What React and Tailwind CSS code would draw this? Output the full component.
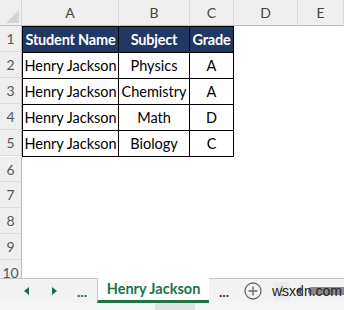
import React from "react";

const cols = [
  { key: "A", w: "w-[97px]" },
  { key: "B", w: "w-[71px]" },
  { key: "C", w: "w-[44px]" },
  { key: "D", w: "w-[64px]" },
  { key: "E", w: "flex-1" },
];

const data = [
  ["Henry Jackson", "Physics", "A"],
  ["Henry Jackson", "Chemistry", "A"],
  ["Henry Jackson", "Math", "D"],
  ["Henry Jackson", "Biology", "C"],
];

function RowNum({ n }) {
  return (
    <div className="w-[22px] shrink-0 h-full flex items-center justify-center bg-[#efefef] border-r border-[#bdbdbd] border-b border-b-[#dcdcdc] text-[14px] text-[#555]">
      {n}
    </div>
  );
}

export default function App() {
  return (
    <div
      className="w-[344px] h-[310px] overflow-hidden relative bg-white flex flex-col whitespace-nowrap"
      style={{ fontFamily: "Lato, 'Liberation Sans', sans-serif" }}
    >
      {/* sheet */}
      <div className="h-[278px] overflow-hidden shrink-0">
        {/* column headers */}
        <div className="flex h-[26px] bg-[#efefef] border-b border-[#bdbdbd]">
          <div className="w-[22px] shrink-0 border-r border-[#d6d6d6] relative">
            <svg className="absolute right-[2px] bottom-[2px]" width="13" height="13" viewBox="0 0 13 13">
              <polygon points="13,0 13,13 0,13" fill="#d4d4d4" />
            </svg>
          </div>
          {cols.map((c) => (
            <div
              key={c.key}
              className={`${c.w} shrink-0 flex items-center justify-center border-r border-[#dadada] text-[14px] text-[#444]`}
            >
              {c.key}
            </div>
          ))}
        </div>

        {/* row 1 header */}
        <div className="flex h-[26px]">
          <RowNum n={1} />
          <div className="flex bg-[#203864] border-l border-t border-r border-black text-white font-bold text-[14.5px] tracking-[-0.2px]">
            <div className="w-[96px] flex items-center justify-center border-r border-black">Student Name</div>
            <div className="w-[71px] flex items-center justify-center border-r border-black">Subject</div>
            <div className="w-[43px] flex items-center justify-center">Grade</div>
          </div>
        </div>

        {/* data rows */}
        {data.map((r, i) => (
          <div key={i} className="flex h-[26px]">
            <RowNum n={i + 2} />
            <div className="flex border-l border-r border-t border-black text-[14.5px] text-black">
              <div className="w-[96px] flex items-center justify-center border-r border-black">{r[0]}</div>
              <div className="w-[71px] flex items-center justify-center border-r border-black">{r[1]}</div>
              <div className="w-[43px] flex items-center justify-center">{r[2]}</div>
            </div>
          </div>
        ))}
        <div className="ml-[22px] w-[212px] border-t border-black" />

        {[6, 7, 8, 9, 10].map((n) => (
          <div key={n} className={`flex ${n === 6 ? "h-[25px]" : "h-[26px]"}`}>
            <RowNum n={n} />
          </div>
        ))}
      </div>

      {/* tab bar */}
      <div className="h-[25px] shrink-0 flex bg-[#f3f3f3]">
        <div className="w-[97px] shrink-0 border-t border-[#c4c4c4] flex items-center">
          <svg className="ml-[24px]" width="5" height="8" viewBox="0 0 5 8">
            <polygon points="5,0 5,8 0,4" fill="#1e6b45" />
          </svg>
          <svg className="ml-[23px]" width="5" height="8" viewBox="0 0 5 8">
            <polygon points="0,0 0,8 5,4" fill="#1e6b45" />
          </svg>
          <span className="ml-[20px] text-[14px] font-bold text-[#1e6b45] leading-none mt-[2px]">...</span>
        </div>
        <div className="w-[112px] shrink-0 bg-white border-l border-[#c4c4c4] border-b-[3px] border-b-[#217346] flex items-center justify-center text-[14.5px] font-bold text-[#217346]">
          Henry Jackson
        </div>
        <div className="flex-1 border-t border-[#c4c4c4] flex items-center">
          <span className="ml-[10px] text-[14px] font-bold text-[#333] leading-none mt-[2px]">...</span>
          <svg className="ml-[15px]" width="18" height="18" viewBox="0 0 18 18">
            <circle cx="9" cy="9" r="8" fill="none" stroke="#6b6b6b" strokeWidth="1.3" />
            <path d="M9 4.5v9M4.5 9h9" stroke="#6b6b6b" strokeWidth="1.4" />
          </svg>
          <div className="ml-[12px] h-[18px] w-[16px] bg-[#ececec] flex flex-col items-center justify-center gap-[2px]">
            <span className="w-[2px] h-[2px] bg-[#aaa]" />
            <span className="w-[2px] h-[2px] bg-[#aaa]" />
            <span className="w-[2px] h-[2px] bg-[#aaa]" />
          </div>
          <svg className="ml-[6px]" width="5" height="8" viewBox="0 0 5 8">
            <polygon points="5,0 5,8 0,4" fill="#606060" />
          </svg>
          <div className="ml-[7px] h-[8px] flex-1 rounded-l-full bg-[#8a8a8a]" />
        </div>
      </div>

      {/* bottom strip */}
      <div className="flex-1 bg-[#f7f7f7] flex">
        <div className="ml-[155px] w-[40px] bg-[#e2e2e2]" />
      </div>

      <span
        className="absolute left-[272px] top-[284px] text-[14px] text-[#222] leading-none"
        style={{ fontFamily: "'Liberation Sans', sans-serif" }}
      >
        wsxdn.com
      </span>
    </div>
  );
}
